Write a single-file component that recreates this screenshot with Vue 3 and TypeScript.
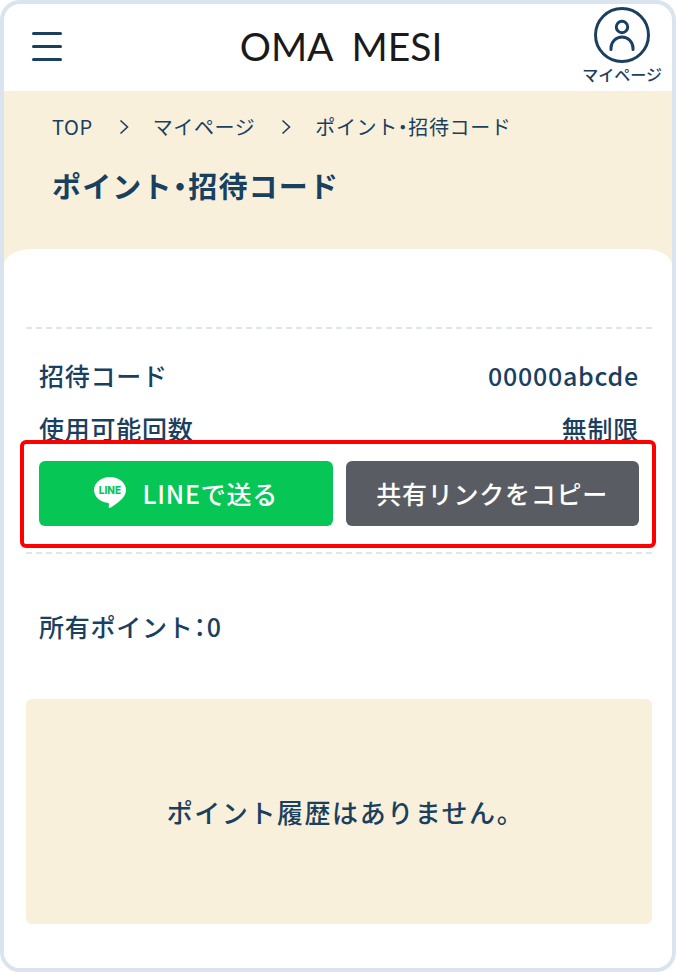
<script setup lang="ts">
import { ref } from 'vue'

interface Crumb {
  label: string
  href?: string
}

interface InviteRow {
  label: string
  value: string
}

const pageTitle = 'ポイント・招待コード'

const crumbs: Crumb[] = [
  { label: 'TOP', href: '#top' },
  { label: 'マイページ', href: '#mypage' },
  { label: pageTitle },
]

const inviteRows: InviteRow[] = [
  { label: '招待コード', value: '00000abcde' },
  { label: '使用可能回数', value: '無制限' },
]

const points = ref<number>(0)

function copyLink(): void {
  navigator.clipboard?.writeText(`${location.href}?code=${inviteRows[0].value}`)
}
</script>

<template>
  <div class="shell">
    <header class="header">
      <button class="menu" type="button" aria-label="メニュー">
        <span class="bar"></span>
        <span class="bar"></span>
        <span class="bar"></span>
      </button>
      <a class="logo" href="#top"><span>OMA</span> <span>MESI</span></a>
      <a class="account" href="#mypage">
        <svg class="account-icon" viewBox="0 0 56 56" fill="none" stroke="currentColor" aria-hidden="true">
          <circle cx="28" cy="28" r="26.5" stroke-width="3" />
          <circle cx="28" cy="20" r="5.700" stroke-width="3" />
          <path d="M17 42.500v-1.500a11 11 0 0 1 22 0v1.500" stroke-width="3" stroke-linecap="round" />
        </svg>
        <span class="account-label">マイページ</span>
      </a>
    </header>

    <div class="hero">
      <nav aria-label="パンくずリスト">
        <ol class="crumbs">
          <li v-for="(crumb, i) in crumbs" :key="crumb.label" class="crumb">
            <svg v-if="i > 0" class="chevron" viewBox="0 0 10 16" fill="none" stroke="currentColor" stroke-width="1.600" aria-hidden="true">
              <path d="M1.500 1.500 8.500 8l-7 6.500" />
            </svg>
            <a v-if="crumb.href" class="crumb-link" :href="crumb.href">{{ crumb.label }}</a>
            <span v-else aria-current="page">{{ crumb.label }}</span>
          </li>
        </ol>
      </nav>
      <h1 class="title">{{ pageTitle }}</h1>
    </div>

    <main class="content">
      <section class="invite">
        <dl class="rows">
          <div v-for="row in inviteRows" :key="row.label" class="row">
            <dt>{{ row.label }}</dt>
            <dd class="value">{{ row.value }}</dd>
          </div>
        </dl>
        <div class="actions">
          <button class="button line" type="button">
            <svg class="line-icon" viewBox="0 0 32 31" aria-hidden="true">
              <path d="M16 0C7.200 0 0 5.800 0 13c0 6.400 5.700 11.800 13.400 12.800 1.900.4 1.700 1.300 1.300 3.900-.1.700.1 1.600 1.400 1 1.300-.5 7-4.100 11.200-8.300C30.500 19.400 32 16.400 32 13 32 5.800 24.800 0 16 0Z" fill="#fff" />
              <text class="line-mark" x="16" y="17" text-anchor="middle">LINE</text>
            </svg>
            <span>LINEで送る</span>
          </button>
          <button class="button copy" type="button" @click="copyLink">共有リンクをコピー</button>
        </div>
      </section>

      <p class="points">所有ポイント：{{ points }}</p>

      <section class="history">
        <p class="empty">ポイント履歴はありません。</p>
      </section>
    </main>
  </div>
</template>

<style>
body {
  margin: 0;
  background: #fff;
}
</style>

<style scoped>
.shell {
  box-sizing: border-box;
  min-height: 100vh;
  border: 4px solid #d9e4ee;
  border-radius: 20px;
  overflow: hidden;
  background: #fff;
  color: #1a4060;
  font-family: "Noto Sans CJK JP", sans-serif;
  font-weight: 500;
  font-feature-settings: "halt";
}

.header {
  box-sizing: border-box;
  display: grid;
  grid-template-columns: 1fr auto 1fr;
  align-items: center;
  height: 87px;
  padding: 0 10px 3px 16px;
}

.menu {
  display: flex;
  flex-direction: column;
  gap: 10px;
  width: 30px;
  margin-left: 12px;
  padding: 0;
  border: 0;
  background: none;
  color: inherit;
}

.bar {
  height: 3px;
  border-radius: 2px;
  background: currentColor;
}

.logo {
  display: flex;
  gap: 18px;
  color: #1a1a1a;
  font-family: Lato, sans-serif;
  font-size: 39px;
  line-height: 40px;
  font-weight: 400;
  text-decoration: none;
}

.account {
  display: flex;
  flex-direction: column;
  align-items: center;
  justify-self: end;
  color: inherit;
  text-decoration: none;
}

.account-icon {
  width: 56px;
  height: 56px;
}

.account-label {
  font-size: 16px;
  line-height: 22px;
}

.hero {
  padding: 24px 48px 64px;
  background: #f8f0db;
}

.crumbs {
  display: flex;
  flex-wrap: wrap;
  gap: 26px;
  margin: 0;
  padding: 0;
  list-style: none;
  font-size: 20px;
  line-height: 24px;
  font-weight: 400;
  letter-spacing: 0.03em;
}

.crumb {
  display: flex;
  align-items: center;
  gap: 24px;
}

.crumb-link {
  color: inherit;
  text-decoration: none;
}

.chevron {
  width: 10px;
  height: 16px;
}

.title {
  margin: 26px 0 0;
  font-size: 29px;
  line-height: 40px;
  font-weight: 700;
  letter-spacing: 0.04em;
}

.content {
  margin-top: -20px;
  padding: 78px 20px 44px 22px;
  border-radius: 28px 28px 0 0 / 16px 16px 0 0;
  background: #fff;
}

.invite {
  padding: 28px 13px 26px;
  border: dashed #e2e5e8;
  border-width: 2px 0;
}

.rows {
  display: flex;
  flex-direction: column;
  gap: 17px;
  margin: 0;
  font-size: 25px;
  line-height: 36px;
  letter-spacing: 0.03em;
}

.row {
  display: flex;
  justify-content: space-between;
}

.value {
  margin: 0;
}

.actions {
  position: relative;
  display: grid;
  grid-template-columns: 1fr 1fr;
  gap: 13px;
  margin-top: 15px;
}

/* Highlight frame laid over the share buttons */
.actions::after {
  content: "";
  position: absolute;
  inset: -21px -17px -22px -19px;
  border: 4px solid #f00;
  border-radius: 6px;
  pointer-events: none;
}

.button {
  display: flex;
  align-items: center;
  justify-content: center;
  gap: 17px;
  height: 65px;
  padding: 0 0 2px;
  border: 0;
  border-radius: 6px;
  color: #fff;
  font: inherit;
  font-size: 25px;
  line-height: 36px;
  letter-spacing: 0.03em;
  font-feature-settings: inherit;
}

.line {
  background: #06c755;
}

.copy {
  background: #595d63;
}

.line-icon {
  width: 32px;
  height: 31px;
}

.line-mark {
  fill: #06c755;
  font-family: Inter, sans-serif;
  font-size: 10px;
  font-weight: 800;
  letter-spacing: 0;
}

.points {
  margin: 54px 13px 55px;
  font-size: 25px;
  line-height: 36px;
  letter-spacing: 0.03em;
}

.history {
  display: flex;
  align-items: center;
  justify-content: center;
  min-height: 225px;
  border-radius: 6px;
  background: #f8f0db;
}

.empty {
  margin: 0;
  font-size: 26px;
  line-height: 36px;
  letter-spacing: 0.06em;
}
</style>
